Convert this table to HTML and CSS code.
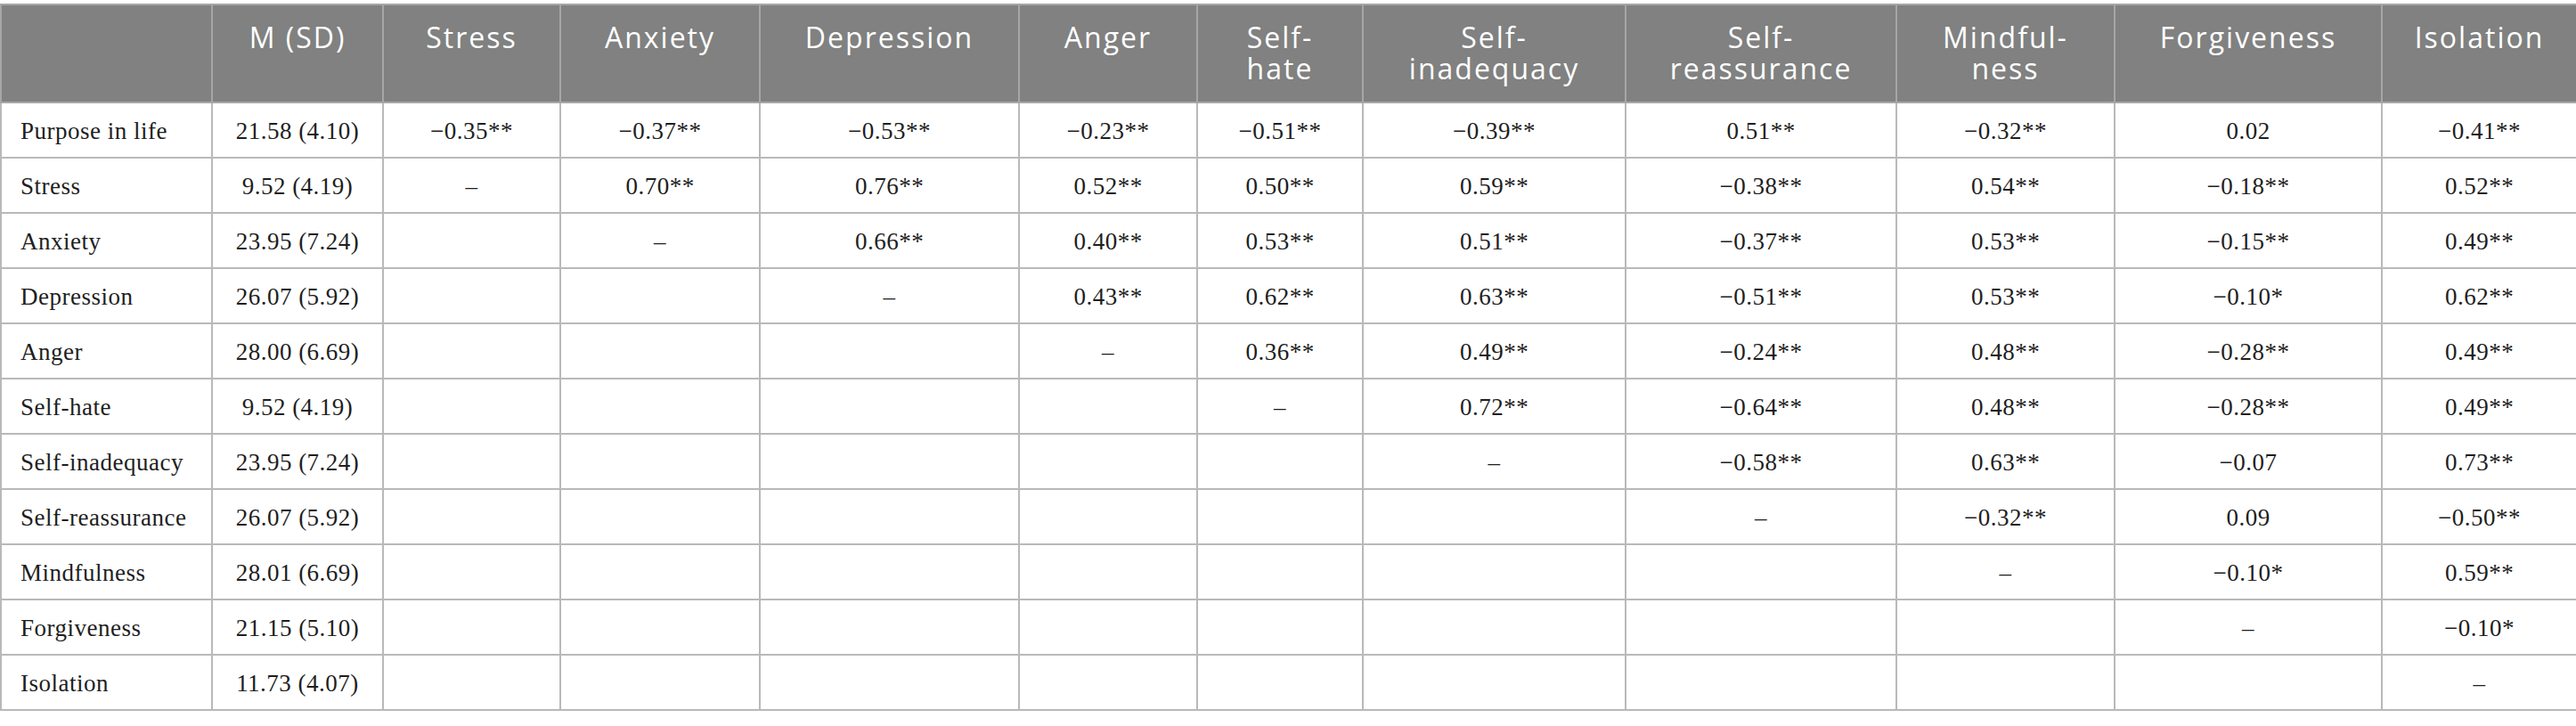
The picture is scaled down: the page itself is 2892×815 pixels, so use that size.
FILE: index.html
```html
<!DOCTYPE html>
<html lang="en">
<head>
<meta charset="utf-8">
<title>Correlation table</title>
<link rel="stylesheet" href="styles.css">
</head>
<body>
<table class="corr">
  <colgroup>
    <col class="w-label"><col class="w-msd"><col class="w-stress"><col class="w-anx"><col class="w-dep"><col class="w-anger"><col class="w-hate"><col class="w-inad"><col class="w-reas"><col class="w-mind"><col class="w-forg"><col class="w-iso">
  </colgroup>
  <thead>
    <tr class="head-row">
      <th></th>
      <th>M (SD)</th>
      <th>Stress</th>
      <th>Anxiety</th>
      <th>Depression</th>
      <th>Anger</th>
      <th><span class="hl">Self-</span><span class="hl">hate</span></th>
      <th><span class="hl">Self-</span><span class="hl">inadequacy</span></th>
      <th><span class="hl">Self-</span><span class="hl">reassurance</span></th>
      <th><span class="hl">Mindful-</span><span class="hl">ness</span></th>
      <th>Forgiveness</th>
      <th>Isolation</th>
    </tr>
  </thead>
  <tbody>
    <tr><td>Purpose in life</td><td>21.58 (4.10)</td><td>−0.35**</td><td>−0.37**</td><td>−0.53**</td><td>−0.23**</td><td>−0.51**</td><td>−0.39**</td><td>0.51**</td><td>−0.32**</td><td>0.02</td><td>−0.41**</td></tr>
    <tr><td>Stress</td><td>9.52 (4.19)</td><td>–</td><td>0.70**</td><td>0.76**</td><td>0.52**</td><td>0.50**</td><td>0.59**</td><td>−0.38**</td><td>0.54**</td><td>−0.18**</td><td>0.52**</td></tr>
    <tr><td>Anxiety</td><td>23.95 (7.24)</td><td></td><td>–</td><td>0.66**</td><td>0.40**</td><td>0.53**</td><td>0.51**</td><td>−0.37**</td><td>0.53**</td><td>−0.15**</td><td>0.49**</td></tr>
    <tr><td>Depression</td><td>26.07 (5.92)</td><td></td><td></td><td>–</td><td>0.43**</td><td>0.62**</td><td>0.63**</td><td>−0.51**</td><td>0.53**</td><td>−0.10*</td><td>0.62**</td></tr>
    <tr><td>Anger</td><td>28.00 (6.69)</td><td></td><td></td><td></td><td>–</td><td>0.36**</td><td>0.49**</td><td>−0.24**</td><td>0.48**</td><td>−0.28**</td><td>0.49**</td></tr>
    <tr><td>Self-hate</td><td>9.52 (4.19)</td><td></td><td></td><td></td><td></td><td>–</td><td>0.72**</td><td>−0.64**</td><td>0.48**</td><td>−0.28**</td><td>0.49**</td></tr>
    <tr><td>Self-inadequacy</td><td>23.95 (7.24)</td><td></td><td></td><td></td><td></td><td></td><td>–</td><td>−0.58**</td><td>0.63**</td><td>−0.07</td><td>0.73**</td></tr>
    <tr><td>Self-reassurance</td><td>26.07 (5.92)</td><td></td><td></td><td></td><td></td><td></td><td></td><td>–</td><td>−0.32**</td><td>0.09</td><td>−0.50**</td></tr>
    <tr><td>Mindfulness</td><td>28.01 (6.69)</td><td></td><td></td><td></td><td></td><td></td><td></td><td></td><td>–</td><td>−0.10*</td><td>0.59**</td></tr>
    <tr><td>Forgiveness</td><td>21.15 (5.10)</td><td></td><td></td><td></td><td></td><td></td><td></td><td></td><td></td><td>–</td><td>−0.10*</td></tr>
    <tr><td>Isolation</td><td>11.73 (4.07)</td><td></td><td></td><td></td><td></td><td></td><td></td><td></td><td></td><td></td><td>–</td></tr>
  </tbody>
</table>
</body>
</html>
```
FILE: styles.css
```css
html, body {
  margin: 0;
  padding: 0;
  background: #ffffff;
}
body {
  padding-top: 4px;
}
.corr {
  width: 2892px;
  table-layout: fixed;
  border-collapse: collapse;
  font-family: "Liberation Serif", "Times New Roman", serif;
  font-size: 27px;
  letter-spacing: 0.5px;
  color: #1e1e1e;
}
.w-label { width: 237px; }
.w-msd { width: 192px; }
.w-stress { width: 199px; }
.w-anx { width: 224px; }
.w-dep { width: 291px; }
.w-anger { width: 200px; }
.w-hate { width: 186px; }
.w-inad { width: 295px; }
.w-reas { width: 304px; }
.w-mind { width: 245px; }
.w-forg { width: 300px; }
.w-iso { width: 219px; }

.corr th,
.corr td {
  border: 2px solid #b9b9b9;
  padding: 0;
  text-align: center;
}
.head-row {
  height: 110px;
}
.corr th {
  background: #808180;
  color: #ffffff;
  font-family: "Open Sans", "Noto Sans", sans-serif;
  font-weight: 400;
  font-size: 32px;
  letter-spacing: 2px;
  line-height: 35px;
  vertical-align: top;
  padding-top: 18px;
  border-color: #a6a6a6;
}
.hl {
  display: block;
  height: 35px;
}
.corr tbody tr {
  height: 62px;
}
.corr td {
  vertical-align: middle;
  padding-top: 3px;
  white-space: nowrap;
}
.corr td:first-child {
  text-align: left;
  padding-left: 21px;
}
```
